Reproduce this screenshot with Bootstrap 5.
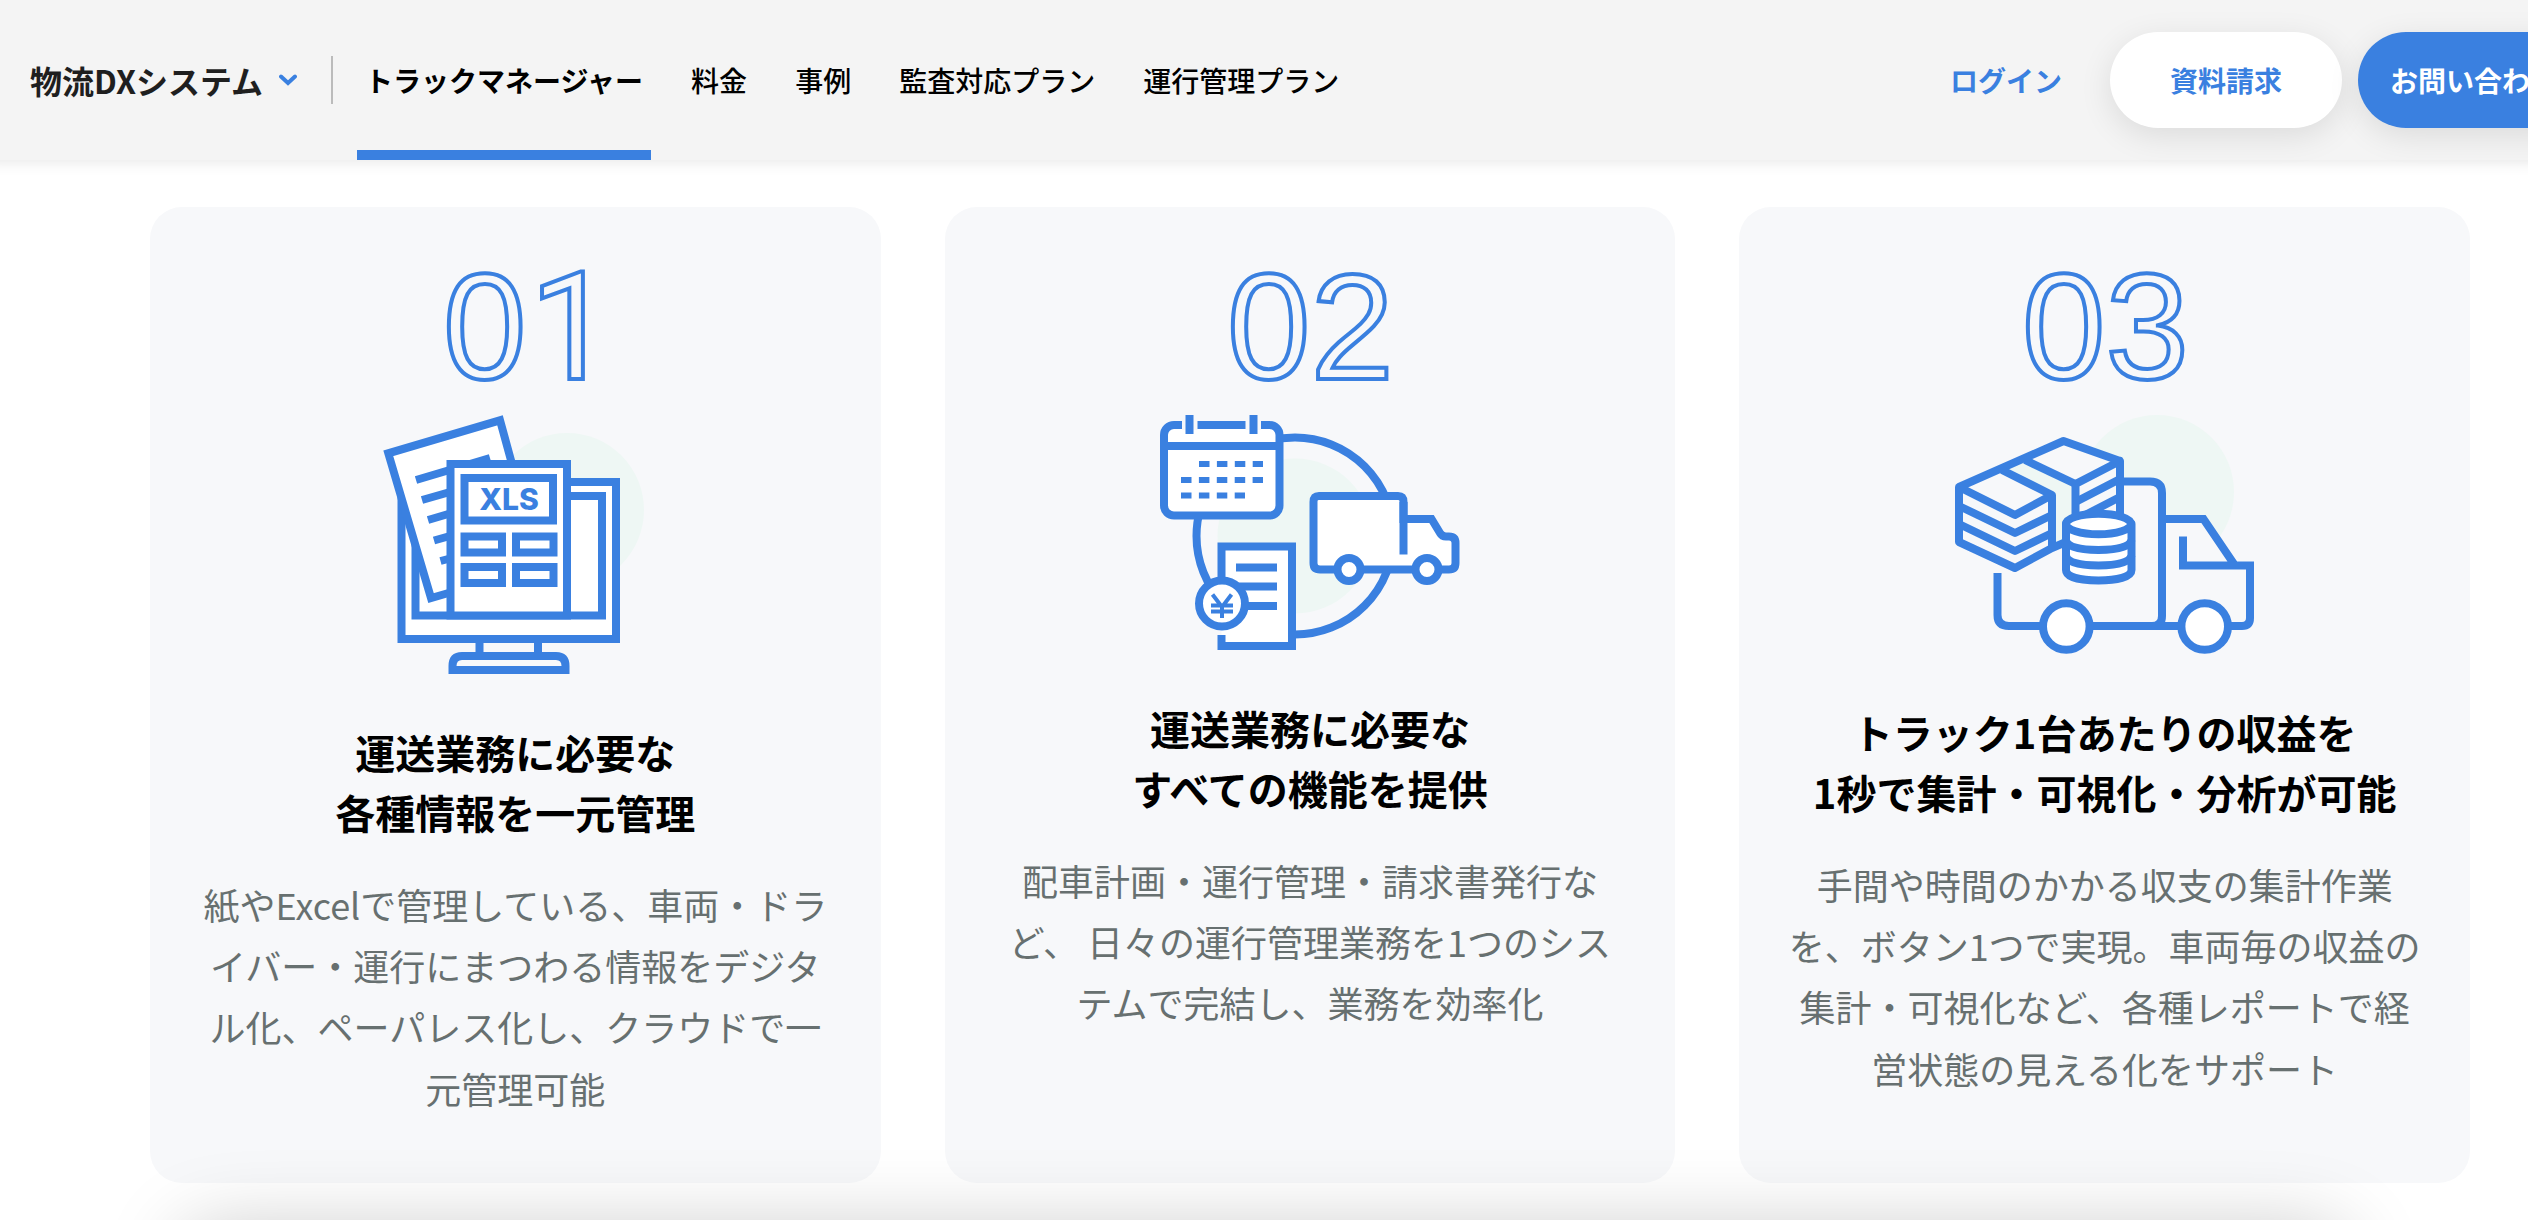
<!DOCTYPE html>
<html lang="ja">
<head>
<meta charset="utf-8">
<meta name="viewport" content="width=device-width, initial-scale=1">
<title>トラックマネージャー</title>
<link href="https://cdn.jsdelivr.net/npm/bootstrap@5.3.0/dist/css/bootstrap.min.css" rel="stylesheet">
<style>
:root { --brand: #3a80e0; }
body { font-family: "Noto Sans CJK JP", sans-serif; color: #000; background: #fff; height: 100vh; overflow: hidden; }
.site-header { background: #f4f4f4; height: 160px; padding-left: 30px; box-shadow: 0 -16px 16px 16px rgba(0,0,0,.12); position: relative; z-index: 2; }
.brand-menu { font-size: 32px; line-height: 48px; font-weight: 700; color: #1f1f1f; gap: 16px; padding: 0; border: 0; background: none; }
.header-rule { width: 2px; height: 48px; background: #bbb; margin: 0 24px 0 34px; }
.main-nav { gap: 32px; }
.main-nav .nav-link { font-size: 28px; font-weight: 500; color: #000; padding: 10px 8px 0; border-bottom: 10px solid transparent; }
.main-nav .nav-link.active { border-color: var(--brand); font-weight: 700; }
.header-actions { font-size: 28px; font-weight: 700; margin-right: -62px; }
.login-link { color: var(--brand); margin-right: 48px; }
.btn-pill { font-size: 28px; font-weight: 700; height: 96px; border-radius: 48px; border: 0; box-shadow: 0 8px 32px rgba(0,0,0,.1); }
.btn-docs, .btn-docs:hover { background: #fff; color: var(--brand); padding: 0 60px; margin-right: 16px; }
.btn-contact, .btn-contact:hover { background: var(--brand); color: #fff; padding: 0 32px; }
.features { padding: 47px 58px 0 150px; }
.feature-grid { --bs-gutter-x: 64px; }
.feature { background: #f7f8fa; border-radius: 32px; padding: 64px 48px; }
.feature-no { width: 240px; height: 112px; margin-bottom: 32px; overflow: visible; }
.feature-no text { font-family: "Liberation Sans", Arial, sans-serif; font-size: 150px; fill: none; stroke: var(--brand); stroke-width: 4px; }
.feature-no .digit-one { font-family: Roboto, sans-serif; }
.feature-art { margin-bottom: 48px; fill: none; stroke: var(--brand); stroke-width: 8; }
.feature-art .sheet-label { font-family: Inter, sans-serif; font-size: 30px; font-weight: 800; fill: var(--brand); stroke: none; }
.feature h2 { font-size: 40px; line-height: 60px; font-weight: 700; margin-bottom: 32px; }
.feature p { font-size: 36px; line-height: 1.7; color: #677070; margin: 0; }
.next-panel { height: 200px; margin: 47px 182px 0; background: #fff; border-radius: 32px; box-shadow: 0 0 80px rgba(0,0,0,.22); position: relative; z-index: 1; }
</style>
</head>
<body>
<header class="site-header d-flex align-items-center">
  <button type="button" class="brand-menu d-flex align-items-center flex-shrink-0">物流DXシステム
    <svg width="18" height="12" viewBox="0 0 18 12" fill="none" stroke="#3a80e0" stroke-width="4" stroke-linecap="round" aria-hidden="true"><path d="M2 2.500 9 9 16 2.500"/></svg>
  </button>
  <div class="header-rule flex-shrink-0"></div>
  <nav class="main-nav nav flex-nowrap h-100 text-nowrap">
    <a class="nav-link active d-flex align-items-center" aria-current="page" href="#">トラックマネージャー</a>
    <a class="nav-link d-flex align-items-center" href="#">料金</a>
    <a class="nav-link d-flex align-items-center" href="#">事例</a>
    <a class="nav-link d-flex align-items-center" href="#">監査対応プラン</a>
    <a class="nav-link d-flex align-items-center" href="#">運行管理プラン</a>
  </nav>
  <div class="header-actions d-flex align-items-center ms-auto flex-shrink-0 text-nowrap">
    <a class="login-link text-decoration-none" href="#">ログイン</a>
    <button type="button" class="btn btn-pill btn-docs">資料請求</button>
    <button type="button" class="btn btn-pill btn-contact">お問い合わせ</button>
  </div>
</header>
<main>
  <section class="features">
    <div class="row feature-grid">
      <div class="col-4">
        <article class="feature h-100 d-flex flex-column align-items-center text-center">
          <svg class="feature-no" viewBox="0 0 240 112" role="img" aria-label="01"><text x="48" y="108">0<tspan class="digit-one" dx="3">1</tspan></text></svg>
          <svg class="feature-art" width="264" height="259" viewBox="23 165 264 259" aria-hidden="true">
            <circle cx="207" cy="260" r="77" fill="#eef7f4" stroke="none"/>
            <rect x="41.500" y="232" width="214.500" height="157" fill="#fff"/>
            <path d="M55.500 260V365.500H242V246H205"/>
            <path d="M28.300 203.300 140 170.300 182 328 71 348Z" fill="#fff" stroke="none"/>
            <path d="M92 342 71 348 28.300 203.300 140 170.300 152 214"/>
            <path d="M56 230 130 208M62 250 90 242M68 270 90 263.500M74 290.500 90 286M80.500 311 92 308"/>
            <rect x="90.500" y="214" width="116.500" height="151.500" fill="#fff"/>
            <rect x="104.500" y="228" width="88.500" height="42.500"/>
            <path d="M104.500 286.500h37.500v16h-37.500zM156 286.500h37.500v16h-37.500zM104.500 317h37.500v16h-37.500zM156 317h37.500v16h-37.500z"/>
            <text class="sheet-label" x="149" y="260" text-anchor="middle">XLS</text>
            <path d="M119.500 392v12M178 392v12M92.500 424V416Q92.500 406 102 406H196Q205.500 406 205.500 416V424M92.500 420H205.500"/>
          </svg>
          <h2>運送業務に必要な<br>各種情報を一元管理</h2>
          <p>紙やExcelで管理している、車両・ドライバー・運行にまつわる情報をデジタル化、ペーパレス化し、クラウドで一元管理可能</p>
        </article>
      </div>
      <div class="col-4">
        <article class="feature h-100 d-flex flex-column align-items-center text-center">
          <svg class="feature-no" viewBox="0 0 240 112" role="img" aria-label="02"><text x="37" y="108">02</text></svg>
          <svg class="feature-art" width="300" height="235" viewBox="20 165 300 235" aria-hidden="true">
            <circle cx="155" cy="286" r="77.500" fill="#eef7f4" stroke="none"/>
            <circle cx="155" cy="286" r="98.500"/>
            <rect x="24" y="175" width="115.500" height="90.500" rx="10" fill="#fff"/>
            <path d="M24 196H139.500"/>
            <path d="M42 170H57.500V180H42ZM105.500 170H121V180H105.500Z" fill="#f7f8fa" stroke="none"/>
            <path d="M49.500 165V184M113.500 165V184"/>
            <path d="M59 214h64M41 230h82M41 245.500h64" stroke-width="6" stroke-dasharray="10.500 7.400"/>
            <path d="M81.500 346V296.500H152V396H81.500V385" fill="#fff"/>
            <path d="M96 317.500h41M96 336.500h41M96 356h41"/>
            <circle cx="82" cy="353.500" r="23" fill="#fff"/>
            <path d="M72.500 344.500 82 357 91.500 344.500M82 356V368M71 355.500H93M71 361.500H93" stroke-width="4"/>
            <path d="M179 246H258Q263.500 246 263.500 252V269H291.500L300 283Q302 286.500 306 286.500H309Q315.500 286.500 315.500 293V313Q315.500 319.500 309 319.500H180Q173.500 319.500 173.500 313V252Q173.500 246 179 246Z" fill="#fff"/>
            <path d="M263.500 252V304.500"/>
            <circle cx="209" cy="319.500" r="11.500" fill="#fff"/><circle cx="287" cy="319.500" r="11.500" fill="#fff"/>
          </svg>
          <h2>運送業務に必要な<br>すべての機能を提供</h2>
          <p>配車計画・運行管理・請求書発行など、 日々の運行管理業務を1つのシステムで完結し、業務を効率化</p>
        </article>
      </div>
      <div class="col-4">
        <article class="feature h-100 d-flex flex-column align-items-center text-center">
          <svg class="feature-no" viewBox="0 0 240 112" role="img" aria-label="03"><text x="37" y="108">03</text></svg>
          <svg class="feature-art" width="300" height="239" viewBox="25 165 300 239" stroke-linejoin="round" aria-hidden="true">
            <circle cx="227" cy="242" r="77" fill="#eef7f4" stroke="none"/>
            <path d="M180 232H220Q232 232 232 244V269H273L304 315.500H320V376H80L130 340Z" fill="#f7f8fa" stroke="none"/>
            <path d="M67.500 323V365Q67.500 376 79 376H112M160 376H250M190 231.500H220Q232 231.500 232 243V366Q232 376 222 376"/>
            <path d="M232 269H273.500L305 315.500M253 286.500V315.500H320V368Q320 376 312 376H300" stroke-linejoin="miter"/>
            <path d="M29 237 133.500 191 190 211V270L122 298 85 318 29 292Z" fill="#f7f8fa" stroke="none"/>
            <path d="M72 220 95 210 145.500 234V275L133 293 122 298V245Z" fill="#eef7f4" stroke="none"/>
            <path d="M145.500 270V234L190 211V270"/>
            <path d="M145.500 252 190 229M145.500 270 190 247"/>
            <path d="M95 210 145.500 234"/>
            <path d="M136 292 122 298 85 318 29 292V237L133.500 191 190 211"/>
            <path d="M72 220 122 245V298M29 237 85 265 122 245"/>
            <path d="M29 256 85 283 122 265M29 274 85 301 122 283"/>
            <path d="M136 274V320C136 327 150 330.500 168.500 330.500S201.500 327 201.500 320V274Z" fill="#fff"/>
            <path d="M136 290C137 297 150 300 168.500 300S200 297 201.500 290M136 305.500C137 312.500 150 315.500 168.500 315.500S200 312.500 201.500 305.500"/>
            <ellipse cx="168.500" cy="274" rx="32.500" ry="10.300" fill="#fff"/>
            <circle cx="136.300" cy="376.500" r="23.300" fill="#fff"/><circle cx="274.700" cy="376.500" r="23.300" fill="#fff"/>
          </svg>
          <h2>トラック1台あたりの収益を<br>1秒で集計・可視化・分析が可能</h2>
          <p>手間や時間のかかる収支の集計作業を、ボタン1つで実現。車両毎の収益の集計・可視化など、各種レポートで経営状態の見える化をサポート</p>
        </article>
      </div>
    </div>
  </section>
  <section class="next-panel" aria-hidden="true"></section>
</main>
<script src="https://cdn.jsdelivr.net/npm/bootstrap@5.3.0/dist/js/bootstrap.bundle.min.js"></script>
</body>
</html>
